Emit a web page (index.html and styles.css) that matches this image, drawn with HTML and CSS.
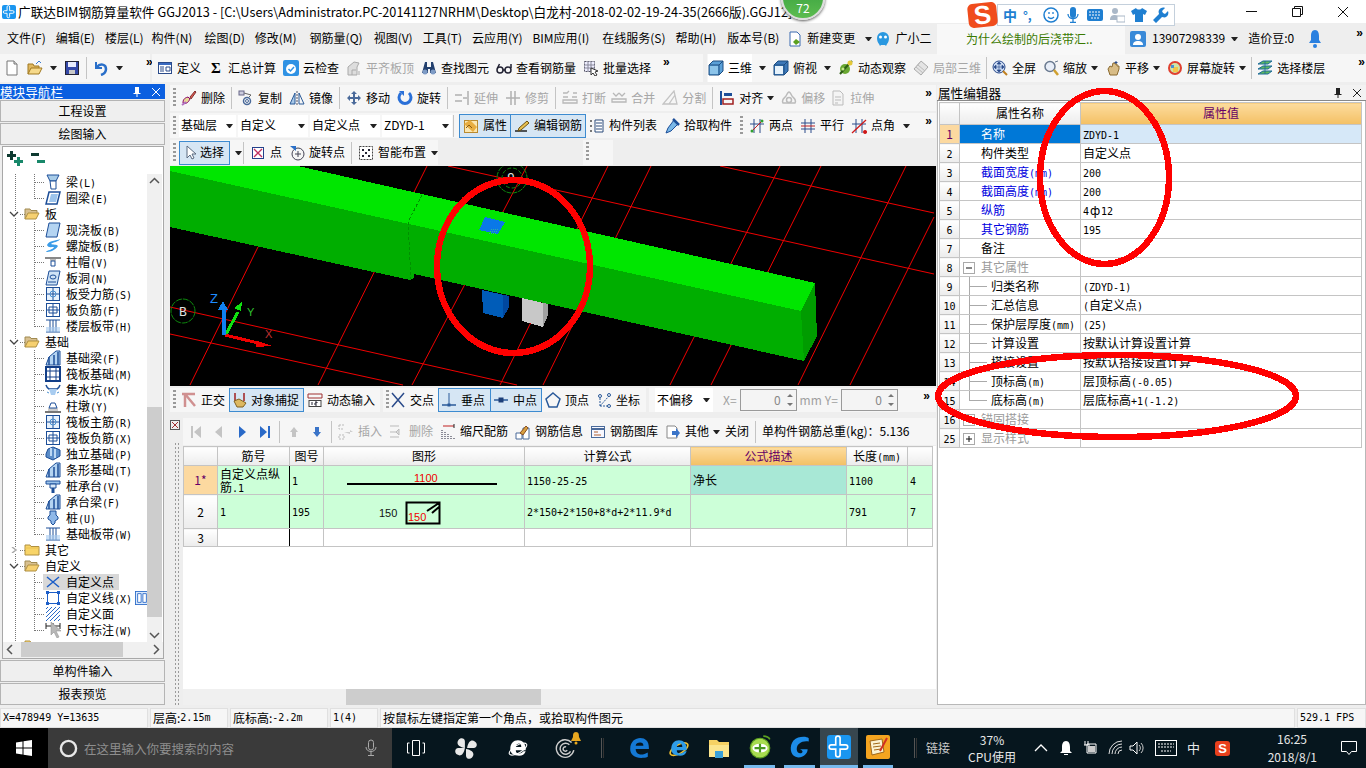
FILE: index.html
```html
<!DOCTYPE html>
<html lang="zh-CN">
<head>
<meta charset="utf-8">
<title>广联达BIM钢筋算量软件 GGJ2013</title>
<link rel="stylesheet" href="styles.css">
</head>
<body>
<svg class="defs" aria-hidden="true">
<symbol id="new" viewBox="0 0 16 16"><path d="M3 1h7l3 3v11H3z" fill="#fff" stroke="#777"/><path d="M10 1v3h3" fill="#ddd" stroke="#777"/></symbol>
<symbol id="open" viewBox="0 0 16 16"><path d="M1 14V4h5l1 2h5v2" fill="#e0b860" stroke="#a07820"/><path d="M1 14l3-6h11l-3 6z" fill="#f6d98a" stroke="#a07820"/><path d="M9 4l3-3 2 2" fill="none" stroke="#3a7ad0"/></symbol>
<symbol id="save" viewBox="0 0 16 16"><rect x="1.500" y="1.500" width="13" height="13" fill="#3448a8" stroke="#223"/><rect x="4" y="2" width="8" height="5" fill="#e8ecff"/><rect x="5" y="10" width="6" height="4" fill="#c8c8c8"/></symbol>
<symbol id="undo" viewBox="0 0 16 16"><path d="M3 2v6h6" fill="none" stroke="#2a6fc9" stroke-width="2"/><path d="M4 7c3-4 9-3 9 2 0 3-2 5-5 6" fill="none" stroke="#2a6fc9" stroke-width="2.500"/></symbol>
<symbol id="def" viewBox="0 0 16 16"><rect x="1.500" y="2.500" width="13" height="11" fill="#fff" stroke="#2a4a8a"/><rect x="2" y="3" width="12" height="2" fill="#3a6ac0"/><path d="M3 7h4M3 9h4M3 11h4M9 7h4v4H9z" fill="none" stroke="#2a4a8a"/></symbol>
<symbol id="cloud" viewBox="0 0 16 16"><rect x="0" y="0" width="16" height="16" rx="2" fill="#2f92e4"/><circle cx="8" cy="9" r="5" fill="#fff"/><path d="M5.500 9l2 2 3.500-4" fill="none" stroke="#2f92e4" stroke-width="1.500"/></symbol>
<symbol id="flat" viewBox="0 0 16 16"><path d="M2 15V7l6-5 5 1-2 4v8z" fill="#ddd" stroke="#aaa"/><path d="M6 15v-5h4M13 11v4" fill="none" stroke="#aaa"/></symbol>
<symbol id="binoc" viewBox="0 0 16 16"><path d="M4 2h2v5h4V2h2l3 11H9V9H7v4H1z" fill="#23406e"/><circle cx="4" cy="12" r="2.500" fill="#7f9cc6"/><circle cx="12" cy="12" r="2.500" fill="#7f9cc6"/></symbol>
<symbol id="glass" viewBox="0 0 16 16"><circle cx="4" cy="10" r="3" fill="none" stroke="#223" stroke-width="1.500"/><circle cx="12" cy="10" r="3" fill="none" stroke="#223" stroke-width="1.500"/><path d="M7 10h2M1.500 8l2-4M15 8v-4" fill="none" stroke="#223" stroke-width="1.500"/></symbol>
<symbol id="batch" viewBox="0 0 16 16"><path d="M1.500 1.500h10v10h-10z" fill="#eef" stroke="#556" stroke-dasharray="2 1"/><path d="M1 5h11M1 8h11M5 1v11M8 1v11" stroke="#889" fill="none"/><path d="M8 8l7 3-3 1 2 3-2 1-2-3-2 2z" fill="#fff" stroke="#333"/></symbol>
<symbol id="cube" viewBox="0 0 16 16"><path d="M1 5l4-4h10v10l-4 4H1z" fill="#5aa0d8" stroke="#1d4d80"/><path d="M1 5h10v10M11 5l4-4" fill="none" stroke="#1d4d80"/><path d="M2 6h8v8H2z" fill="#8cc4ea"/></symbol>
<symbol id="top" viewBox="0 0 16 16"><path d="M1 5l4-4h10v10l-4 4H1z" fill="#3d78b8" stroke="#1d4d80"/><path d="M2 6h8v8H2z" fill="#e6f2fb"/><path d="M1 5h10v10M11 5l4-4" fill="none" stroke="#1d4d80"/></symbol>
<symbol id="orbit" viewBox="0 0 16 16"><circle cx="7" cy="9" r="5" fill="#6aa832"/><path d="M2 14l7-8 5-5" stroke="#2d5f16" stroke-width="2"/><circle cx="12" cy="3" r="2.500" fill="#e4c838"/><circle cx="5" cy="9" r="1.500" fill="#c6e88a"/></symbol>
<symbol id="local" viewBox="0 0 16 16"><path d="M1 9l7-8 7 6-7 8z" fill="#e4e4e4" stroke="#aaa"/><path d="M5 5l7 6M3 7l7 6M8 1l-4 5" stroke="#bbb" fill="none"/></symbol>
<symbol id="full" viewBox="0 0 16 16"><circle cx="7" cy="7" r="6" fill="#c8d8f0" stroke="#2a4a8a"/><path d="M7 2v10M2 7h10M7 2L5 4h4zM7 12l-2-2h4zM2 7l2-2v4zM12 7l-2-2v4z" fill="#2a4a8a" stroke="#2a4a8a" stroke-width=".6"/><path d="M11 11l4 4" stroke="#c08020" stroke-width="2"/></symbol>
<symbol id="zoom" viewBox="0 0 16 16"><circle cx="7" cy="6.500" r="5" fill="#e8eef8" stroke="#6a7a90" stroke-width="1.500"/><path d="M11 10l4 5" stroke="#d0a030" stroke-width="2.500"/><path d="M12 2l3-1" stroke="#6a7a90"/></symbol>
<symbol id="pan" viewBox="0 0 16 16"><path d="M3 9l2 6h7l2-6V6l-2 0V4l-2 0V3L8 3 7 7 5 6z" fill="#d8bc86" stroke="#8a6a30"/><path d="M11 1v3M9.500 2.500h3" stroke="#2a4a8a" fill="none"/></symbol>
<symbol id="rots" viewBox="0 0 16 16"><circle cx="8" cy="8" r="6" fill="#cfe5a8" stroke="#e04030" stroke-width="2"/><rect x="6" y="7" width="5" height="5" fill="#f2c84a"/><rect x="4" y="5" width="3" height="3" fill="#4a90d0"/></symbol>
<symbol id="floors" viewBox="0 0 16 16"><path d="M1 4l5-3h9L11 4zM1 9l5-3h9l-4 3zM1 14l5-3h9l-4 3z" fill="#5cb85c" stroke="#1e6a9a"/><path d="M7 1h2v13H7z" fill="#1e6a9a" opacity=".4"/></symbol>
<symbol id="brush" viewBox="0 0 16 16"><path d="M9 7l5-6 1 1-5 7z" fill="#e05a50" stroke="#803030"/><path d="M2 13c3 1 5 0 7-4l-2-2c-4 1-5 3-5 6z" fill="#e8d898" stroke="#806"/><path d="M1 15l4-3" stroke="#b070c0" stroke-width="2"/></symbol>
<symbol id="copy" viewBox="0 0 16 16"><circle cx="9" cy="11" r="3.500" fill="none" stroke="#4a6a9a" stroke-width="1.500"/><circle cx="9" cy="11" r="1.500" fill="none" stroke="#4a6a9a"/><rect x="1" y="1" width="5" height="4" fill="#ccd" stroke="#668"/><path d="M6 3l7 2-2 2" fill="none" stroke="#666"/></symbol>
<symbol id="mirror" viewBox="0 0 16 16"><path d="M8 1v14" stroke="#556" stroke-dasharray="2 1"/><path d="M6 3v11H1z" fill="#a8c8e8" stroke="#2a5a98"/><path d="M10 3v11h5z" fill="none" stroke="#2a5a98"/></symbol>
<symbol id="move" viewBox="0 0 16 16"><path d="M8 1l3 3H9v3h3V5l3 3-3 3V9H9v3h2l-3 3-3-3h2V9H4v2L1 8l3-3v2h3V4H5z" fill="#4a6a9a"/></symbol>
<symbol id="rotate" viewBox="0 0 16 16"><path d="M4 3a6 6 0 1 0 8 0" fill="none" stroke="#2a70d8" stroke-width="3"/><path d="M2 1h5v5z" fill="#2a70d8"/></symbol>
<symbol id="ext" viewBox="0 0 16 16"><path d="M14 1v14M1 5h7M1 11h7M9 8h4" fill="none" stroke="#b0b0b0" stroke-width="1.500"/></symbol>
<symbol id="trim" viewBox="0 0 16 16"><path d="M6 1v14M10 1v14M1 8h14" fill="none" stroke="#b0b0b0" stroke-width="1.500"/></symbol>
<symbol id="brk" viewBox="0 0 16 16"><path d="M1 3h4l2-2M15 3h-4M1 13v-3h14v3H1zM1 7h5M10 7h5" fill="none" stroke="#b8b8b8" stroke-width="1.300"/></symbol>
<symbol id="mrg" viewBox="0 0 16 16"><path d="M2 3l3 3 3-3M8 3l3 3 3-3M1 9h14v3H1z" fill="none" stroke="#b8b8b8" stroke-width="1.300"/></symbol>
<symbol id="spl" viewBox="0 0 16 16"><path d="M1 14h14L12 1zM7 14l6-9" fill="none" stroke="#c4c4c4" stroke-width="1.300"/></symbol>
<symbol id="align" viewBox="0 0 16 16"><path d="M2 1v14" stroke="#1c4e98" stroke-width="2"/><path d="M5 3h8v3H5z" fill="#1c4e98"/><path d="M4 9h10v5H4z" fill="none" stroke="#a02020" stroke-width="1.500"/></symbol>
<symbol id="off" viewBox="0 0 16 16"><path d="M2 13c-2-4 2-5 3-7s2-4 3-4 2 2 3 4 5 3 3 7z" fill="none" stroke="#bbb" stroke-width="1.500"/><circle cx="8" cy="10" r="2.500" fill="none" stroke="#bbb" stroke-width="1.500"/></symbol>
<symbol id="strc" viewBox="0 0 16 16"><path d="M3 1h7l3 3v11H3z" fill="#f4f4f4" stroke="#bbb"/><path d="M5 7h6M5 10h6M5 13h3" stroke="#bbb"/></symbol>
<symbol id="attr" viewBox="0 0 16 16"><rect x="1.500" y="2.500" width="13" height="12" fill="#fbe6b0" stroke="#b98a30"/><path d="M1 6l6-4 7 7-4 5z" fill="#e8ad40"/><path d="M3 10l3-3 3 3" stroke="#8a5a10" fill="none"/></symbol>
<symbol id="edit" viewBox="0 0 16 16"><path d="M1 13h12" stroke="#222" stroke-width="1.500"/><path d="M5 10l8-7 2 2-8 7-3 1z" fill="#e8c050" stroke="#6a5010"/></symbol>
<symbol id="lst" viewBox="0 0 16 16"><path d="M6 2h8v12H6z" fill="#fff" stroke="#2a4a7a"/><path d="M7 5h6M7 8h6M7 11h6" stroke="#2a4a7a"/><path d="M1 2h2v2H1zM1 7h2v2H1zM1 12h2v2H1z" fill="#777"/></symbol>
<symbol id="pick" viewBox="0 0 16 16"><path d="M10 2l4 4-7 7-5 2 2-5z" fill="#7ab8e8" stroke="#1c4e98"/><path d="M9 1l6 6" stroke="#1c4e98" stroke-width="2.500"/></symbol>
<symbol id="two" viewBox="0 0 16 16"><path d="M5 1v14M11 1v14M1 6h14" stroke="#2a4a8a" fill="none"/><path d="M2 14L14 2" stroke="#c02020"/><circle cx="3" cy="13" r="1.500" fill="#30a030"/><circle cx="13" cy="3" r="1.500" fill="#30a030"/></symbol>
<symbol id="par" viewBox="0 0 16 16"><path d="M5 1v14M11 1v14M1 5h14M1 11h14" stroke="#2a4a8a" fill="none"/><path d="M1 8h14" stroke="#c02020"/></symbol>
<symbol id="ang" viewBox="0 0 16 16"><path d="M5 1v14M11 1v14M1 6h14" stroke="#2a4a8a" fill="none"/><path d="M1 15L15 2" stroke="#d01818" stroke-width="1.300"/><path d="M14 12a2 2 0 1 0 .1 0" fill="#d01818"/></symbol>
<symbol id="arrow" viewBox="0 0 16 16"><path d="M5 1v12l3-3 2 4 2-1-2-4h4z" fill="#fff" stroke="#5a6a80"/></symbol>
<symbol id="pt" viewBox="0 0 16 16"><rect x="2.500" y="2.500" width="11" height="11" fill="#fff" stroke="#24408a"/><path d="M4 4l8 8M12 4l-8 8" stroke="#c03060" stroke-width="1.300"/></symbol>
<symbol id="rpt" viewBox="0 0 16 16"><circle cx="9" cy="9" r="6" fill="none" stroke="#445"/><path d="M9 6v6M6 9h6" stroke="#445"/><path d="M1 1h6v5z" fill="#2a70c8"/></symbol>
<symbol id="smart" viewBox="0 0 16 16"><rect x="1.500" y="1.500" width="13" height="13" fill="#fff" stroke="#444" stroke-dasharray="2 1"/><path d="M4 4h2v2H4zM10 4h2v2h-2zM4 10h2v2H4zM10 10h2v2h-2zM7 7h2v2H7z" fill="#223"/></symbol>
<symbol id="ortho" viewBox="0 0 16 16"><path d="M1 2h13M4 2l10 12" stroke="#d09090" stroke-width="2.500" fill="none"/><path d="M4 2v13" stroke="#d09090" stroke-width="2.500"/></symbol>
<symbol id="snap" viewBox="0 0 16 16"><path d="M3 1v8M12 1v8" stroke="#a02020" stroke-width="1.500"/><path d="M2 9l5-2 7 4-3 4H5z" fill="#ddb860" stroke="#806020"/></symbol>
<symbol id="dyn" viewBox="0 0 16 16"><path d="M1 2h14M1 6h14M1 2v4M15 2v4" stroke="#a03030" fill="none"/><rect x="2" y="8.500" width="12" height="6" fill="#fff" stroke="#444"/><path d="M5 10v3M8 10h2v1H8v2h2" stroke="#223" fill="none"/></symbol>
<symbol id="cross" viewBox="0 0 16 16"><path d="M2 1l12 14M14 1L2 15" stroke="#2a4a8a" stroke-width="1.500"/></symbol>
<symbol id="perp" viewBox="0 0 16 16"><path d="M1 13h14" stroke="#2a5a9a" stroke-width="1.500"/><path d="M8 1v12" stroke="#2a5a9a"/><rect x="6.500" y="11.500" width="3" height="3" fill="#2a5a9a"/></symbol>
<symbol id="mid" viewBox="0 0 16 16"><path d="M1 8h14" stroke="#2a5a9a" stroke-width="1.500"/><rect x="5.500" y="5.500" width="5" height="5" fill="#1c3e78"/></symbol>
<symbol id="vtx" viewBox="0 0 16 16"><path d="M8 1l7 6-3 8H4L1 7z" fill="none" stroke="#2a5a9a" stroke-width="1.500"/></symbol>
<symbol id="crd" viewBox="0 0 16 16"><path d="M4 14V5M4 14h9M4 14L13 4" stroke="#2a5a9a" fill="none" stroke-dasharray="2 1"/><circle cx="4" cy="4" r="1.500" fill="none" stroke="#2a5a9a"/><circle cx="13" cy="14" r="1.500" fill="none" stroke="#2a5a9a"/><circle cx="13" cy="3" r="1.500" fill="none" stroke="#2a5a9a"/></symbol>
<symbol id="first" viewBox="0 0 16 16"><path d="M3 2h2v12H3zM13 2v12L6 8z" fill="#c4c4c4"/></symbol>
<symbol id="prev" viewBox="0 0 16 16"><path d="M11 2v12L4 8z" fill="#c4c4c4"/></symbol>
<symbol id="next" viewBox="0 0 16 16"><path d="M5 2v12l7-6z" fill="#2a6ac8"/></symbol>
<symbol id="last" viewBox="0 0 16 16"><path d="M11 2h2v12h-2zM3 2v12l7-6z" fill="#2a6ac8"/></symbol>
<symbol id="up" viewBox="0 0 16 16"><path d="M8 3l4 5H10v5H6V8H4z" fill="#c4c4c4"/></symbol>
<symbol id="down" viewBox="0 0 16 16"><path d="M8 13l4-5H10V3H6v5H4z" fill="#3a74c8"/></symbol>
<symbol id="ins" viewBox="0 0 16 16"><path d="M1 1h5M1 1v4h5M1 11h5v4H1z" stroke="#bbb" fill="none" stroke-dasharray="2 1"/><path d="M6 8h9l-3-2v4z" fill="#ccc"/></symbol>
<symbol id="del" viewBox="0 0 16 16"><path d="M1 2h9M1 13h9" stroke="#bbb"/><path d="M1 8h6l3-3v6l-3-3" stroke="#bbb" fill="#ddd"/></symbol>
<symbol id="scl" viewBox="0 0 16 16"><path d="M2 15V5M5 15V8M8 15v-5M11 15v-3M14 15v-1" stroke="#556" stroke-width="1.300" stroke-dasharray="1 1"/><path d="M3 2h11" stroke="#c02020"/><path d="M14 0v4" stroke="#222"/></symbol>
<symbol id="info" viewBox="0 0 16 16"><path d="M1 15V9h6v6z" fill="#fff" stroke="#4a6a9a"/><path d="M8 15V4h6v11z" fill="#fff" stroke="#4a6a9a"/><path d="M5 9l6-7 2 2-5 7z" fill="#d8a040" stroke="#8a5020"/></symbol>
<symbol id="lib" viewBox="0 0 16 16"><rect x="1.500" y="2.500" width="13" height="11" fill="#f8f8ff" stroke="#4a6a9a"/><path d="M2 5h12" stroke="#4a6a9a" stroke-width="2"/><path d="M4 8h4M4 11h7" stroke="#b06030"/></symbol>
<symbol id="other" viewBox="0 0 16 16"><path d="M2 2h8l2 2v10H2z" fill="#fff" stroke="#888"/><path d="M7 7h4V4l4 5-4 5v-3H7z" fill="#3a74c8"/></symbol>
<symbol id="fopen" viewBox="0 0 16 16"><path d="M1 13V3h5l1 1.500h6V7" fill="#d8c090" stroke="#a08a50"/><path d="M1 13l3-6h11l-3 6z" fill="#f6d070" stroke="#b09040"/></symbol>
<symbol id="fclose" viewBox="0 0 16 16"><path d="M1 3h5l1 1.500h8V13H1z" fill="#f8d468" stroke="#b09040"/><path d="M1 6h14" stroke="#e8c050"/></symbol>
<symbol id="t1" viewBox="0 0 16 16"><path d="M2 1h12l-3 6H5z" fill="#a8cce8" stroke="#1c4e98"/><path d="M5 7h6v8H6z" fill="#fff" stroke="#1c4e98"/></symbol>
<symbol id="t2" viewBox="0 0 16 16"><path d="M4 2h11l-3 12H1z" fill="#fff" stroke="#1c4e98" stroke-width="1.500"/><path d="M6 4h7l-2 8H4z" fill="#9cc4ec"/></symbol>
<symbol id="t3" viewBox="0 0 16 16"><path d="M4 1h11l-3 14H1z" fill="#b4d4f2" stroke="#1c4e98"/></symbol>
<symbol id="t4" viewBox="0 0 16 16"><path d="M2 7c2-5 9-4 13-6-1 3-7 3-9 5 2 1 6 0 7 2-3 5-9 6-12 6 1-2 7-2 8-5-3 0-6 1-7-2z" fill="#3a9ce8"/></symbol>
<symbol id="t5" viewBox="0 0 16 16"><path d="M0 3h16v2H0z" fill="#888"/><path d="M5 5h6v2H5z" fill="#bbb"/><path d="M6 7h4v5H6z" fill="#fff" stroke="#1c4e98"/></symbol>
<symbol id="t6" viewBox="0 0 16 16"><path d="M4 1h11l-3 14H1z" fill="#cfe3f6" stroke="#1c4e98"/><ellipse cx="8" cy="7" rx="3" ry="2" fill="none" stroke="#1c4e98"/><path d="M3 12h8" stroke="#1c4e98"/></symbol>
<symbol id="t7" viewBox="0 0 16 16"><rect x="1.500" y="1.500" width="13" height="13" fill="#e8f2fc" stroke="#1c4e98"/><path d="M8 2v12M2 8h12" stroke="#1c4e98"/><circle cx="8" cy="8" r="3" fill="none" stroke="#4a90d0"/></symbol>
<symbol id="t8" viewBox="0 0 16 16"><rect x="1.500" y="1.500" width="13" height="13" fill="#fff" stroke="#1c4e98"/><path d="M8 2v12M2 8h12M4 5h8v6H4z" fill="none" stroke="#1c4e98"/></symbol>
<symbol id="t9" viewBox="0 0 16 16"><path d="M1 2h14M1 14h14M5 2v12M11 2v12M8 2v12" fill="none" stroke="#1c4e98"/><rect x="1" y="9" width="14" height="5" fill="#a8ccf0" opacity=".6"/></symbol>
<symbol id="t10" viewBox="0 0 16 16"><path d="M1 15l3-8 7-6h4v14z" fill="#b4d4f2" stroke="#1c4e98"/><path d="M4 15V7M9 15V5M13 15V2" stroke="#1c4e98" fill="none" stroke-width="1.500"/></symbol>
<symbol id="t11" viewBox="0 0 16 16"><rect x="1" y="1" width="14" height="14" fill="none" stroke="#123e88" stroke-width="2"/><path d="M1 5h14M1 11h14M5 1v14M11 1v14" stroke="#123e88"/></symbol>
<symbol id="t12" viewBox="0 0 16 16"><path d="M1 3c1 3 3 4 3 4h8s2-1 3-4" fill="none" stroke="#1c4e98" stroke-width="1.500"/><path d="M4 7l2 6h4l2-6z" fill="#a8ccf0"/><path d="M2 10l2 1M14 10l-2 1" stroke="#4a90d0"/></symbol>
<symbol id="t13" viewBox="0 0 16 16"><path d="M0 13h16v2H0z" fill="#777"/><path d="M3 10h10v3H3z" fill="#ccc"/><path d="M6 5h4l2 5H4z" fill="#fff" stroke="#1c4e98"/></symbol>
<symbol id="t14" viewBox="0 0 16 16"><path d="M3 3l5-2 7 3v6l-7 4-7-3V8z" fill="#5a8cc8" stroke="#1c4e98"/><path d="M6 2v8M10 3v9" stroke="#bcd8f4" stroke-width="2"/></symbol>
<symbol id="t15" viewBox="0 0 16 16"><path d="M1 3h14v3H1z" fill="#9cc4ec" stroke="#1c4e98"/><path d="M5 6h6v4H5z" fill="#d8e8f8" stroke="#1c4e98"/><path d="M8 10v5" stroke="#1c4e98" stroke-width="3"/></symbol>
<symbol id="t16" viewBox="0 0 16 16"><path d="M5 1h6v4l2 2v2l-3 2v2l-2 2-2-2v-2L3 9V7l2-2z" fill="#8fb8e8" stroke="#1c4e98"/></symbol>
<symbol id="tp" viewBox="0 0 16 16"><path d="M2 3l12 10M14 3L2 13" stroke="#1c5ec8" stroke-width="1.500"/></symbol>
<symbol id="tl" viewBox="0 0 16 16"><rect x="2.500" y="2.500" width="11" height="11" fill="none" stroke="#1c5ec8"/><path d="M1 1h3v3H1zM12 1h3v3h-3zM1 12h3v3H1zM12 12h3v3h-3z" fill="#1c5ec8"/></symbol>
<symbol id="ta" viewBox="0 0 16 16"><path d="M1 3l2-2M1 7l6-6M1 11L11 1M1 15L15 1M5 15L15 5M9 15l6-6M13 15l2-2" stroke="#2a6ac8"/></symbol>
<symbol id="td" viewBox="0 0 16 16"><path d="M1 4h14M1 1v6M8 1v6M15 1v6" stroke="#222" fill="none"/></symbol>
<symbol id="tb" viewBox="0 0 16 16"><rect x=".5" y=".5" width="15" height="15" fill="#dbeafc" stroke="#2a6ac8"/><path d="M3 3h4v10H3zM9 3h4v10H9z" fill="#fff" stroke="#2a6ac8"/></symbol>
<symbol id="edge" viewBox="0 0 20 20"><path d="M2 11C2 4 7 1 11 1c5 0 8 3 8 9v1H7c0 3 2 5 5 5 2 0 4-1 6-2v4c-2 1-4 1-6 1-6 0-10-3-10-8zM7 8h7c0-2-1-3-3-3s-4 1-4 3z" fill="#1478d4"/></symbol>
<symbol id="iee" viewBox="0 0 20 20"><ellipse cx="10" cy="11" rx="9" ry="4" fill="none" stroke="#f0c030" stroke-width="1.500" transform="rotate(-30 10 11)"/><path d="M3 11c0-5 3-8 7-8s7 3 7 8v1H8c0 2 1 3 3 3s3-1 4-2h2c-1 3-3 4-6 4-5 0-8-2-8-6zM8 9h5c0-2-1-3-2-3s-3 1-3 3z" fill="#2e9ce8"/></symbol>
<symbol id="ie0" viewBox="0 0 20 20"><path d="M3 11c0-5 3-8 7-8s7 3 7 8v1H8c0 2 1 3 3 3s3-1 4-2h2c-1 3-3 4-6 4-5 0-8-2-8-6zM8 9h5c0-2-1-3-2-3s-3 1-3 3z" fill="#fff"/><ellipse cx="10" cy="11" rx="9" ry="3.500" fill="none" stroke="#fff" transform="rotate(-30 10 11)"/></symbol>
<symbol id="fan" viewBox="0 0 20 20"><path d="M9 10C3 9 1 6 3 3s6-2 6 1zM11 10c1-6 4-8 7-6s2 6-1 6zM10 11c6 1 8 4 6 7s-6 2-6-1zM9 10c-1 6-4 8-7 6s-2-6 1-6z" fill="#e8e8e8"/></symbol>
<symbol id="swirl" viewBox="0 0 20 20"><path d="M16 5A8 8 0 1 0 18 12M14 7a5 5 0 1 0 1 6M11 9a2 2 0 1 0 1 3" fill="none" stroke="#ccc" stroke-width="1.300"/></symbol>
<symbol id="fold" viewBox="0 0 22 22"><path d="M1 3h8l2 2h10v15H1z" fill="#f6d264"/><path d="M1 8h20v12H1z" fill="#fce68e"/><path d="M7 14h8v7H7z" fill="#3aa0d8"/></symbol>
<symbol id="grn" viewBox="0 0 22 22"><circle cx="11" cy="12" r="9" fill="#a8dc50" stroke="#5aa020"/><ellipse cx="11" cy="12" rx="7" ry="4" fill="#fff"/><path d="M6 12h10M11 8v8" stroke="#4a9820" stroke-width="2"/><path d="M14 1c3 0 5 1 6 3" stroke="#5aa020" fill="none" stroke-width="1.500"/></symbol>
<symbol id="gl" viewBox="0 0 22 22"><path d="M19 3c-2-2-10-2-14 2-4 5-3 13 2 15 5 2 11-2 11-7h-7c2 1 3 2 2 3-2 2-5 0-5-3 0-5 5-8 11-7z" fill="#1c8ce8"/></symbol>
<symbol id="cross2" viewBox="0 0 22 22"><rect x="0" y="0" width="22" height="22" rx="3" fill="#1a96f0"/><path d="M8 3a2 2 0 0 1 4 0v6h5a2 2 0 0 1 0 4h-5v5a2 2 0 0 1-4 0v-5H4a2 2 0 0 1 0-4h4z" fill="none" stroke="#fff" stroke-width="1.500"/></symbol>
<symbol id="note" viewBox="0 0 24 24"><rect x="0" y="0" width="24" height="24" rx="2" fill="#f4a420"/><path d="M4 6l12-2 2 13-12 3z" fill="#fbf2d0" stroke="#a06818"/><path d="M7 9l7-1M7 12l8-1M8 15l7-1" stroke="#a06818"/><path d="M14 16l7-13" stroke="#d03020" stroke-width="2"/></symbol>
</svg>

<div class="app">

<header class="title">
  <svg class="appicon" viewBox="0 0 14 14"><use href="#cross2"/></svg>
  <span class="title-text">广联达BIM钢筋算量软件 GGJ2013 - [C:\Users\Administrator.PC-20141127NRHM\Desktop\白龙村-2018-02-02-19-24-35(2666版).GGJ12]</span>
  <div class="winbtns">
    <svg class="win" viewBox="0 0 46 23"><path d="M18 11.500h11" stroke="#111"/></svg>
    <svg class="win" viewBox="0 0 46 23"><path d="M18.500 8.500h8v8h-8zM20.500 8V6.500h8v8H27" fill="none" stroke="#111"/></svg>
    <svg class="win" viewBox="0 0 46 23"><path d="M18 7l10 10M28 7L18 17" stroke="#111"/></svg>
  </div>
</header>

<nav class="menu">
  <div class="menu-items">
    <span>文件(F)</span><span>编辑(E)</span><span>楼层(L)</span><span class="ml-2">构件(N)</span><span class="ml2">绘图(D)</span><span>修改(M)</span><span class="ml3">钢筋量(Q)</span><span class="ml1">视图(V)</span><span>工具(T)</span><span>云应用(Y)</span><span>BIM应用(I)</span><span class="ml3">在线服务(S)</span><span>帮助(H)</span><span class="ml1">版本号(B)</span>
    <span class="it ml-2"><svg class="ic" viewBox="0 0 16 16"><path d="M3 1h7l3 3v11H3z" fill="#fff" stroke="#3a6ab0"/><path d="M9 8l4 3-4 3-3-3z" fill="#5aa020"/></svg>新建变更</span><i class="ar"></i>
    <span class="it gx"><svg class="ic" viewBox="0 0 16 16"><path d="M2 7a6 6 0 0 1 12 0c0 3-1 5-2 6l-1 2-1-1H6l-1 1-1-2C3 12 2 10 2 7z" fill="#2a98e0"/><circle cx="5.500" cy="6" r="1.500" fill="#fff"/><circle cx="10.500" cy="6" r="1.500" fill="#fff"/></svg>广小二</span>
  </div>
  <div class="notice">为什么绘制的后浇带汇..</div>
  <div class="user">
    <svg class="ic" viewBox="0 0 16 16"><rect width="16" height="16" rx="2" fill="#3a8ad8"/><circle cx="8" cy="6" r="3" fill="#fff"/><path d="M3 14c0-3 2-4 5-4s5 1 5 4z" fill="#fff"/></svg>
    <span>13907298339</span><i class="ar"></i><span class="bean">造价豆:0</span>
    <svg class="bell" viewBox="0 0 14 20"><path d="M7 1c3 0 4 3 4 6v4l2 3H1l2-3V7c0-3 1-6 4-6z" fill="#2a80e0"/><circle cx="7" cy="17" r="2" fill="#2a80e0"/></svg>
  </div>
  <b class="more">»</b>
</nav>

<div class="tb1">
  <div class="tb1-a">
    <svg class="ic"><use href="#new"/></svg>
    <svg class="ic"><use href="#open"/></svg><i class="ar"></i>
    <svg class="ic"><use href="#save"/></svg><i class="sep"></i>
    <svg class="ic"><use href="#undo"/></svg><i class="ar"></i>
    <b class="more">»</b>
  </div>
  <div class="tb1-b">
    <span class="it"><svg class="ic"><use href="#def"/></svg>定义</span>
    <span class="it"><span class="sigma">Σ</span>汇总计算</span>
    <span class="it"><svg class="ic"><use href="#cloud"/></svg>云检查</span>
    <span class="it dim"><svg class="ic"><use href="#flat"/></svg>平齐板顶</span>
    <span class="it"><svg class="ic"><use href="#binoc"/></svg>查找图元</span>
    <span class="it"><svg class="ic"><use href="#glass"/></svg>查看钢筋量</span>
    <span class="it"><svg class="ic"><use href="#batch"/></svg>批量选择</span>
    <b class="more">»</b>
  </div>
  <div class="tb1-c">
    <span class="it lit"><svg class="ic"><use href="#cube"/></svg>三维</span><i class="ar"></i>
    <span class="it"><svg class="ic"><use href="#top"/></svg>俯视</span><i class="ar"></i>
    <span class="it"><svg class="ic"><use href="#orbit"/></svg>动态观察</span>
    <span class="it dim"><svg class="ic"><use href="#local"/></svg>局部三维</span><i class="sep n"></i>
    <span class="it"><svg class="ic"><use href="#full"/></svg>全屏</span>
    <span class="it"><svg class="ic"><use href="#zoom"/></svg>缩放</span><i class="ar tight"></i>
    <span class="it"><svg class="ic"><use href="#pan"/></svg>平移</span><i class="ar tight"></i>
    <span class="it"><svg class="ic"><use href="#rots"/></svg>屏幕旋转</span><i class="ar tight"></i><i class="sep n"></i>
    <span class="it"><svg class="ic"><use href="#floors"/></svg>选择楼层</span>
    <b class="more pushed">»</b>
  </div>
</div>

<main class="main">

<aside class="nav">
  <div class="paneltitle"><span>模块导航栏</span>
    <span class="pt-icons"><svg class="ti" viewBox="0 0 10 12"><path d="M3 1h4v6h1.500v1h-3v3h-1V8h-3V7H3z" fill="#fff"/></svg><svg class="ti" viewBox="0 0 10 12"><path d="M1 2l8 8M9 2l-8 8" stroke="#fff"/></svg></span></div>
  <div class="navbtn">工程设置</div>
  <div class="navbtn">绘图输入</div>
  <div class="treebox">
    <div class="treetop">
      <svg class="tti" viewBox="0 0 16 16"><path d="M3 1h3v3h3v3H6v3H3V7H0V4h3z" fill="#0e3a30"/><path d="M10 7h3v3h3v3h-3v3h-3v-3H7v-3h3z" fill="#18886a"/></svg>
      <svg class="tti" viewBox="0 0 16 16"><path d="M1 3h8v3H1z" fill="#0e3a30"/><path d="M7 10h8v3H7z" fill="#18886a"/></svg>
    </div>
    <div class="treemid">
      <div class="treelist">
        <div class="tr c"><svg class="ic"><use href="#t1"/></svg><span>梁<i class="m">(L)</i></span></div>
        <div class="tr c last"><svg class="ic"><use href="#t2"/></svg><span>圈梁<i class="m">(E)</i></span></div>
        <div class="tr f"><svg class="chev" viewBox="0 0 10 6"><path d="M1 1l4 4 4-4" fill="none" stroke="#444" stroke-width="1.300"/></svg><svg class="ic"><use href="#fopen"/></svg><span>板</span></div>
        <div class="tr c"><svg class="ic"><use href="#t3"/></svg><span>现浇板<i class="m">(B)</i></span></div>
        <div class="tr c"><svg class="ic"><use href="#t4"/></svg><span>螺旋板<i class="m">(B)</i></span></div>
        <div class="tr c"><svg class="ic"><use href="#t5"/></svg><span>柱帽<i class="m">(V)</i></span></div>
        <div class="tr c"><svg class="ic"><use href="#t6"/></svg><span>板洞<i class="m">(N)</i></span></div>
        <div class="tr c"><svg class="ic"><use href="#t7"/></svg><span>板受力筋<i class="m">(S)</i></span></div>
        <div class="tr c"><svg class="ic"><use href="#t8"/></svg><span>板负筋<i class="m">(F)</i></span></div>
        <div class="tr c last"><svg class="ic"><use href="#t9"/></svg><span>楼层板带<i class="m">(H)</i></span></div>
        <div class="tr f"><svg class="chev" viewBox="0 0 10 6"><path d="M1 1l4 4 4-4" fill="none" stroke="#444" stroke-width="1.300"/></svg><svg class="ic"><use href="#fopen"/></svg><span>基础</span></div>
        <div class="tr c"><svg class="ic"><use href="#t10"/></svg><span>基础梁<i class="m">(F)</i></span></div>
        <div class="tr c"><svg class="ic"><use href="#t11"/></svg><span>筏板基础<i class="m">(M)</i></span></div>
        <div class="tr c"><svg class="ic"><use href="#t12"/></svg><span>集水坑<i class="m">(K)</i></span></div>
        <div class="tr c"><svg class="ic"><use href="#t13"/></svg><span>柱墩<i class="m">(Y)</i></span></div>
        <div class="tr c"><svg class="ic"><use href="#t7"/></svg><span>筏板主筋<i class="m">(R)</i></span></div>
        <div class="tr c"><svg class="ic"><use href="#t8"/></svg><span>筏板负筋<i class="m">(X)</i></span></div>
        <div class="tr c"><svg class="ic"><use href="#t14"/></svg><span>独立基础<i class="m">(P)</i></span></div>
        <div class="tr c"><svg class="ic"><use href="#t10"/></svg><span>条形基础<i class="m">(T)</i></span></div>
        <div class="tr c"><svg class="ic"><use href="#t15"/></svg><span>桩承台<i class="m">(V)</i></span></div>
        <div class="tr c"><svg class="ic"><use href="#t10"/></svg><span>承台梁<i class="m">(F)</i></span></div>
        <div class="tr c"><svg class="ic"><use href="#t16"/></svg><span>桩<i class="m">(U)</i></span></div>
        <div class="tr c last"><svg class="ic"><use href="#t9"/></svg><span>基础板带<i class="m">(W)</i></span></div>
        <div class="tr f"><svg class="chev" viewBox="0 0 10 6"><path d="M3 0l4 3-4 3" fill="none" stroke="#aaa" stroke-width="1.500"/></svg><svg class="ic"><use href="#fclose"/></svg><span>其它</span></div>
        <div class="tr f"><svg class="chev" viewBox="0 0 10 6"><path d="M1 1l4 4 4-4" fill="none" stroke="#444" stroke-width="1.300"/></svg><svg class="ic"><use href="#fopen"/></svg><span>自定义</span></div>
        <div class="tr c"><span class="selbox"><svg class="ic"><use href="#tp"/></svg><span>自定义点</span></span></div>
        <div class="tr c"><svg class="ic"><use href="#tl"/></svg><span>自定义线<i class="m">(X)</i></span><svg class="ic tbi"><use href="#tb"/></svg></div>
        <div class="tr c"><svg class="ic"><use href="#ta"/></svg><span>自定义面</span></div>
        <div class="tr c last"><svg class="ic"><use href="#td"/></svg><span>尺寸标注<i class="m">(W)</i></span></div>
        <div class="tr f"><span class="chevgap"></span><svg class="ic"><use href="#fclose"/></svg></div>
      </div>
      <div class="vs">
        <svg class="vsa" viewBox="0 0 15 15"><path d="M3 9l4.500-4.500L12 9" fill="none" stroke="#555" stroke-width="1.500"/></svg>
        <div class="vst"><div class="vsthumb"></div></div>
        <svg class="vsa" viewBox="0 0 15 15"><path d="M3 6l4.500 4.500L12 6" fill="none" stroke="#555" stroke-width="1.500"/></svg>
      </div>
      <svg class="cursor" viewBox="0 0 12 16"><path d="M1 0l10 9H6l3 6-2 1-3-6-3 3z" fill="#b8b8b8" stroke="#888" stroke-width=".5"/></svg>
    </div>
    <div class="hs">
      <svg class="hsa" viewBox="0 0 15 15"><path d="M9 3L4.500 7.500 9 12" fill="none" stroke="#555" stroke-width="1.500"/></svg>
      <div class="hst"><div class="hsthumb"></div></div>
      <svg class="hsa" viewBox="0 0 15 15"><path d="M6 3l4.500 4.500L6 12" fill="none" stroke="#555" stroke-width="1.500"/></svg>
    </div>
  </div>
  <div class="navbtn">单构件输入</div>
  <div class="navbtn">报表预览</div>
</aside>

<section class="center">
  <div class="bar r1">
    <i class="grip"></i>
    <span class="it"><svg class="ic"><use href="#brush"/></svg>删除</span><i class="sep"></i>
    <span class="it"><svg class="ic"><use href="#copy"/></svg>复制</span>
    <span class="it"><svg class="ic"><use href="#mirror"/></svg>镜像</span><i class="sep"></i>
    <span class="it"><svg class="ic"><use href="#move"/></svg>移动</span>
    <span class="it"><svg class="ic"><use href="#rotate"/></svg>旋转</span><i class="sep"></i>
    <span class="it dim"><svg class="ic"><use href="#ext"/></svg>延伸</span>
    <span class="it dim"><svg class="ic"><use href="#trim"/></svg>修剪</span><i class="sep"></i>
    <span class="it dim"><svg class="ic"><use href="#brk"/></svg>打断</span>
    <span class="it dim ml-2"><svg class="ic"><use href="#mrg"/></svg>合并</span>
    <span class="it dim"><svg class="ic"><use href="#spl"/></svg>分割</span><i class="sep"></i>
    <span class="it"><svg class="ic"><use href="#align"/></svg>对齐</span><i class="ar tight"></i>
    <span class="it dim"><svg class="ic"><use href="#off"/></svg>偏移</span>
    <span class="it dim ml-2"><svg class="ic"><use href="#strc"/></svg>拉伸</span>
    <b class="more pushed">»</b>
  </div>
  <div class="bar r2">
    <i class="grip"></i>
    <div class="combo c1"><span>基础层</span><i class="ar"></i></div>
    <div class="combo c2"><span>自定义</span><i class="ar"></i></div>
    <div class="combo c3"><span>自定义点</span><i class="ar"></i></div>
    <div class="combo c4"><span>ZDYD-1</span><i class="ar"></i></div>
    <i class="sep"></i>
    <div class="group">
      <span class="it on"><svg class="ic"><use href="#attr"/></svg>属性</span>
      <span class="it on"><svg class="ic"><use href="#edit"/></svg>编辑钢筋</span>
    </div>
    <span class="it ml1"><svg class="ic"><use href="#lst"/></svg>构件列表</span>
    <span class="it ml5"><svg class="ic"><use href="#pick"/></svg>拾取构件</span>
    <i class="grip g2"></i>
    <span class="it"><svg class="ic"><use href="#two"/></svg>两点</span>
    <span class="it ml5"><svg class="ic"><use href="#par"/></svg>平行</span>
    <span class="it ml5"><svg class="ic"><use href="#ang"/></svg>点角</span><i class="ar a6"></i>
    <b class="more pushed">»</b>
  </div>
  <div class="r3">
    <div class="r3-a">
      <i class="grip"></i>
      <span class="it on solo"><svg class="ic"><use href="#arrow"/></svg>选择</span><i class="ar"></i><i class="sep"></i>
      <span class="it"><svg class="ic"><use href="#pt"/></svg>点</span>
      <span class="it"><svg class="ic"><use href="#rpt"/></svg>旋转点</span><i class="sep"></i>
      <span class="it"><svg class="ic"><use href="#smart"/></svg>智能布置</span><i class="ar"></i>
    </div>
    <div class="r3-b"><i class="grip"></i></div>
  </div>

  <div class="viewport">
    <svg class="scene" viewBox="170 166 765 220">
      <g class="grid">
        <path d="M427 166L318 385M258 247L190 385M527 166L412 385M608 166L500 385M651 166L543 385M780 166L670 385M821 166L711 385M906 166L798 385M934 217L850 385"/>
        <path d="M720 166L934 213M448 166L934 274M170 307L517 385M170 334L403 385"/>
      </g>
      <g class="hexes">
        <circle cx="512" cy="178" r="15" stroke-dasharray="5 1"/>
        <circle cx="512" cy="178" r="10" stroke-dasharray="4 2"/>
        <circle cx="183" cy="311" r="12" stroke-dasharray="6 1"/>
      </g>
      <text class="lbl" x="179" y="316">B</text>
      <text class="lbl" x="507" y="182">9</text>
      <path class="side" d="M482 290l27 6v11l-6 11-20-5z"/>
      <path class="front" d="M482 290l21 5v23l-20-5z"/>
      <path class="gside" d="M522 298l26 6v11l-5 12-21-6z"/>
      <path class="gfront" d="M522 298l21 5v24l-21-6z"/>
      <g class="beam">
        <path class="b-top" d="M170 166H298L815 283 801 311 170 171z"/>
        <path class="b-front" d="M170 171L801 311 804 361 414 274 414 278 410 280 170 227z"/>
        <path class="b-end" d="M815 283L817 336 804 361 801 311z"/>
      </g>
      <path class="seam" d="M422 195L408 222 411 279"/>
      <path class="bsq" d="M485 217l20 5-7 12-19-4z"/>
      <path class="bsqd" d="M491 229h8M490 231h8M489 233h8"/>
      <path class="ax-x" d="M225 335L258 343"/><path class="ax-xh" d="M272 346l-15-5-1 6z"/>
      <path class="ax-y" d="M226 334L238 312"/><path class="ax-yh" d="M242 302l-8 6 7 3z"/>
      <path class="ax-z" d="M224 335V310"/><path class="ax-zh" d="M223 301l-5 9h10z"/>
      <text class="t-z" x="210" y="303">Z</text><text class="t-y" x="247" y="316">Y</text><text class="t-x" x="265" y="338">X</text>
      <ellipse class="ring" cx="513.500" cy="266.500" rx="76.500" ry="86.500"/>
    </svg>
  </div>

  <div class="r4">
    <div class="r4-a">
      <i class="grip"></i>
      <span class="it"><svg class="ic"><use href="#ortho"/></svg>正交</span>
      <span class="it on solo"><svg class="ic"><use href="#snap"/></svg>对象捕捉</span>
      <span class="it ml-3"><svg class="ic"><use href="#dyn"/></svg>动态输入</span>
    </div>
    <div class="r4-b">
      <i class="grip"></i>
      <span class="it"><svg class="ic"><use href="#cross"/></svg>交点</span>
      <div class="group">
        <span class="it on"><svg class="ic"><use href="#perp"/></svg>垂点</span>
        <span class="it on"><svg class="ic"><use href="#mid"/></svg>中点</span>
      </div>
      <span class="it ml-3"><svg class="ic"><use href="#vtx"/></svg>顶点</span>
      <span class="it ml1"><svg class="ic"><use href="#crd"/></svg>坐标</span>
    </div>
    <div class="r4-c">
      <div class="combo c5"><span>不偏移</span><i class="ar"></i></div>
      <span class="dimtxt">X=</span>
      <div class="spin"><span>0</span><i class="spbtn"><svg viewBox="0 0 8 18"><path d="M1 6l3-3 3 3zM1 12l3 3 3-3z" fill="#777"/></svg></i></div>
      <span class="dimtxt">mm</span><span class="dimtxt">Y=</span>
      <div class="spin"><span>0</span><i class="spbtn"><svg viewBox="0 0 8 18"><path d="M1 6l3-3 3 3zM1 12l3 3 3-3z" fill="#777"/></svg></i></div>
      <b class="more pushed">»</b>
    </div>
  </div>

  <div class="rebar">
    <div class="splitter">
      <svg class="closex" viewBox="0 0 10 10"><rect x=".5" y=".5" width="9" height="9" fill="#eee" stroke="#555"/><path d="M2 2l6 6M8 2L2 8" stroke="#a03030"/></svg>
      <i class="dots"></i>
    </div>
    <div class="rebar-main">
      <div class="r5">
        <svg class="ic"><use href="#first"/></svg><svg class="ic"><use href="#prev"/></svg><svg class="ic"><use href="#next"/></svg><svg class="ic"><use href="#last"/></svg><i class="sep"></i>
        <svg class="ic"><use href="#up"/></svg><svg class="ic"><use href="#down"/></svg><i class="sep"></i>
        <span class="it dim"><svg class="ic"><use href="#ins"/></svg>插入</span>
        <span class="it dim"><svg class="ic"><use href="#del"/></svg>删除</span>
        <span class="it"><svg class="ic"><use href="#scl"/></svg>缩尺配筋</span>
        <span class="it"><svg class="ic"><use href="#info"/></svg>钢筋信息</span>
        <span class="it"><svg class="ic"><use href="#lib"/></svg>钢筋图库</span>
        <span class="it"><svg class="ic"><use href="#other"/></svg>其他</span><i class="ar tight"></i>
        <span class="ml-2">关闭</span><i class="sep"></i>
        <span>单构件钢筋总重(kg)：5.136</span>
      </div>
      <div class="rt-wrap">
        <table class="rt">
          <colgroup><col class="w34"><col class="w72"><col class="w34"><col class="w201"><col class="w166"><col class="w156"><col class="w61"><col class="w25"></colgroup>
          <thead><tr><th></th><th>筋号</th><th>图号</th><th>图形</th><th>计算公式</th><th class="hot">公式描述</th><th>长度<i class="m">(mm)</i></th><th></th></tr></thead>
          <tbody>
            <tr class="g h29"><td class="n hot2">1*</td><td class="bk wrap">自定义点纵筋<i class="m">.1</i></td><td><i class="m">1</i></td><td class="shape"><svg class="s1" viewBox="0 0 201 28"><text x="90" y="16" class="rnum">1100</text><path d="M23 18h150" stroke="#000" stroke-width="2"/></svg></td><td><i class="m">1150-25-25</i></td><td class="desc">净长</td><td><i class="m">1100</i></td><td><i class="m">4</i></td></tr>
            <tr class="g h34"><td class="n w">2</td><td class="bk"><i class="m">1</i></td><td><i class="m">195</i></td><td class="shape"><svg class="s1" viewBox="0 0 201 33"><text x="55" y="22" class="bnum">150</text><path d="M82.500 7.500h33v21h-33zM115 8l-12 8M115 12l-7 6" fill="none" stroke="#000" stroke-width="2"/><text x="84" y="26" class="rnum">150</text></svg></td><td><i class="m">2*150+2*150+8*d+2*11.9*d</i></td><td></td><td><i class="m">791</i></td><td><i class="m">7</i></td></tr>
            <tr class="h18"><td class="n w">3</td><td class="bk"></td><td></td><td></td><td></td><td></td><td></td><td></td></tr>
          </tbody>
        </table>
        <div class="rhs"><div class="rhs-thumb"></div></div>
      </div>
    </div>
  </div>
</section>

<aside class="props">
  <div class="props-title"><span>属性编辑器</span><span class="pt-icons"><svg class="ti" viewBox="0 0 10 12"><path d="M3 1h4v6h1.500v1h-3v3h-1V8h-3V7H3z" fill="#222"/></svg><svg class="ti" viewBox="0 0 10 12"><path d="M1 2l8 8M9 2l-8 8" stroke="#222"/></svg></span></div>
  <div class="props-body">
    <table class="pt">
      <colgroup><col class="pw20"><col class="pw121"><col></colgroup>
      <thead><tr><th></th><th>属性名称</th><th class="hot">属性值</th></tr></thead>
      <tbody>
        <tr class="selrow"><td class="n hot2">1</td><td class="nm sel">名称</td><td class="val"><i class="m">ZDYD-1</i></td></tr>
        <tr><td class="n"><i class="m">2</i></td><td class="nm">构件类型</td><td>自定义点</td></tr>
        <tr><td class="n"><i class="m">3</i></td><td class="nm blue">截面宽度<i class="m">(mm)</i></td><td><i class="m">200</i></td></tr>
        <tr><td class="n"><i class="m">4</i></td><td class="nm blue">截面高度<i class="m">(mm)</i></td><td><i class="m">200</i></td></tr>
        <tr><td class="n"><i class="m">5</i></td><td class="nm blue">纵筋</td><td><i class="m">4</i><span class="rb">ф</span><i class="m">12</i></td></tr>
        <tr><td class="n"><i class="m">6</i></td><td class="nm blue">其它钢筋</td><td><i class="m">195</i></td></tr>
        <tr><td class="n"><i class="m">7</i></td><td class="nm">备注</td><td></td></tr>
        <tr><td class="n"><i class="m">8</i></td><td class="nm grp"><svg class="exp" viewBox="0 0 12 12"><rect x=".5" y=".5" width="11" height="11" fill="#fff" stroke="#aaa"/><path d="M3 6h6" stroke="#111"/></svg>其它属性</td><td></td></tr>
        <tr><td class="n"><i class="m">9</i></td><td class="nm sub">归类名称</td><td><i class="m">(ZDYD-1)</i></td></tr>
        <tr><td class="n"><i class="m">10</i></td><td class="nm sub">汇总信息</td><td><i class="m">(</i>自定义点<i class="m">)</i></td></tr>
        <tr><td class="n"><i class="m">11</i></td><td class="nm sub">保护层厚度<i class="m">(mm)</i></td><td><i class="m">(25)</i></td></tr>
        <tr><td class="n"><i class="m">12</i></td><td class="nm sub">计算设置</td><td>按默认计算设置计算</td></tr>
        <tr><td class="n"><i class="m">13</i></td><td class="nm sub">搭接设置</td><td>按默认搭接设置计算</td></tr>
        <tr><td class="n"><i class="m">14</i></td><td class="nm sub">顶标高<i class="m">(m)</i></td><td>层顶标高<i class="m">(-0.05)</i></td></tr>
        <tr><td class="n"><i class="m">15</i></td><td class="nm subl">底标高<i class="m">(m)</i></td><td>层底标高<i class="m">+1(-1.2)</i></td></tr>
        <tr><td class="n"><i class="m">16</i></td><td class="nm grp"><svg class="exp" viewBox="0 0 12 12"><rect x=".5" y=".5" width="11" height="11" fill="#fff" stroke="#aaa"/><path d="M3 6h6M6 3v6" stroke="#111"/></svg>锚固搭接</td><td></td></tr>
        <tr><td class="n"><i class="m">25</i></td><td class="nm grp"><svg class="exp" viewBox="0 0 12 12"><rect x=".5" y=".5" width="11" height="11" fill="#fff" stroke="#aaa"/><path d="M3 6h6M6 3v6" stroke="#111"/></svg>显示样式</td><td></td></tr>
      </tbody>
    </table>
  </div>
</aside>

</main>

<footer class="status">
  <div class="st st-a"><i class="m">X=478949 Y=13635</i></div>
  <div class="st st-b">层高:<i class="m">2.15m</i></div>
  <div class="st st-c">底标高:<i class="m">-2.2m</i></div>
  <div class="st st-d"><i class="m">1(4)</i></div>
  <div class="st st-e">按鼠标左键指定第一个角点，或拾取构件图元</div>
  <div class="st st-f"><i class="m">529.1 FPS</i></div>
</footer>

<div class="taskbar">
  <div class="start"><svg class="startlogo" viewBox="0 0 16 16"><path d="M0 2.500l6.500-1v6H0zM7.500 1.300L16 0v7.500H7.500zM0 8.500h6.500v6L0 13.500zM7.500 8.500H16V16l-8.500-1.200z" fill="#fff"/></svg></div>
  <div class="search">
    <svg class="cortana" viewBox="0 0 20 20"><circle cx="10" cy="10" r="8" fill="none" stroke="#e8e8e8" stroke-width="2.500"/></svg>
    <span>在这里输入你要搜索的内容</span>
    <svg class="mic" viewBox="0 0 12 18"><rect x="3.500" y="1" width="5" height="10" rx="2.500" fill="none" stroke="#aaa"/><path d="M1 8c0 6 10 6 10 0M6 13v3M3 16.500h6" fill="none" stroke="#aaa"/></svg>
  </div>
  <div class="slot s-task"><svg class="tk" viewBox="0 0 20 20"><path d="M6.500 2.500h7v15h-7zM3.500 5H1.500v10h2M16.500 5h2v10h-2" fill="none" stroke="#fff"/></svg></div>
  <div class="slot s-fan"><svg class="tk22"><use href="#fan"/></svg></div>
  <div class="slot s-ie0"><svg class="tk22"><use href="#ie0"/></svg></div>
  <div class="slot s-sw"><svg class="tk22"><use href="#swirl"/></svg><svg class="ybell" viewBox="0 0 14 14"><path d="M7 1c3 0 3 3 3 5l2 4H2l2-4c0-2 0-5 3-5z" fill="#e8a820"/><circle cx="7" cy="12" r="1.500" fill="#e8a820"/></svg></div>
  <i class="tsep"></i>
  <div class="slot s-edge"><svg class="tk22"><use href="#edge"/></svg></div>
  <div class="slot s-ie"><svg class="tk22"><use href="#iee"/></svg></div>
  <div class="slot s-fold"><svg class="tk22"><use href="#fold"/></svg></div>
  <div class="slot s-grn run"><svg class="tk24"><use href="#grn"/></svg></div>
  <div class="slot s-gl run"><svg class="tk24"><use href="#gl"/></svg></div>
  <div class="slot s-act run"><svg class="tk24"><use href="#cross2"/></svg></div>
  <div class="slot s-note run"><svg class="tk24"><use href="#note"/></svg></div>
  <i class="tsep s2"></i><span class="link">链接</span>
  <div class="cpu"><span>37%</span><span>CPU使用</span></div>
  <div class="tray">
    <svg class="tr16" viewBox="0 0 16 16"><path d="M2 11l6-6 6 6" fill="none" stroke="#fff" stroke-width="1.300"/></svg>
    <svg class="tr16" viewBox="0 0 16 16"><path d="M8 1c3 0 4 3 4 6v4l2 2H2l2-2V7c0-3 1-6 4-6z" fill="#fff"/><path d="M6 14.500h4" stroke="#fff"/></svg>
    <svg class="tr16" viewBox="0 0 16 16"><path d="M4 4h9v9H4z" fill="none" stroke="#fff"/><path d="M5 6h7v6H5z" fill="#ccc"/><path d="M2 1v4M5 1v4M1 5h6" stroke="#fff"/></svg>
    <svg class="tr16" viewBox="0 0 16 16"><path d="M1 14A13 13 0 0 1 14 1M4 14A10 10 0 0 1 14 4M7 14a7 7 0 0 1 7-7M10 14a4 4 0 0 1 4-4" fill="none" stroke="#ddd"/></svg>
    <svg class="tr16 ml-4" viewBox="0 0 16 16"><path d="M1 6h3l4-4v12l-4-4H1z" fill="none" stroke="#fff"/><path d="M10 5a4 4 0 0 1 0 6M12 3a7 7 0 0 1 0 10" fill="none" stroke="#ccc"/></svg>
    <svg class="trk ml1" viewBox="0 0 22 16"><rect x=".5" y=".5" width="21" height="15" fill="none" stroke="#fff"/><path d="M3 4h16M3 7h16M6 11h10" stroke="#fff" stroke-dasharray="2 1"/></svg>
    <span class="zh">中</span>
    <span class="sgs">S</span>
  </div>
  <div class="clock"><span>16:25</span><span>2018/8/1</span></div>
  <svg class="notif" viewBox="0 0 16 16"><path d="M.5 1.500h15v10h-5l-2.500 3-2.500-3h-5z" fill="none" stroke="#fff"/></svg>
</div>

<svg class="marks" viewBox="0 0 1366 768" aria-hidden="true">
  <ellipse class="ring" cx="1104.500" cy="177.500" rx="64.500" ry="86.500"/>
  <ellipse class="ring" cx="1117" cy="396" rx="179" ry="41"/>
</svg>

<div class="badge"><span>72</span></div>

<div class="ime">
  <span class="ime-s">S</span>
  <div class="ime-bar">
    <span class="ime-zh">中</span><span class="ime-p">°,</span>
    <svg class="imei" viewBox="0 0 16 16"><circle cx="8" cy="8" r="7" fill="none" stroke="#1f7fd1" stroke-width="1.500"/><path d="M6 5v2M10 5v2M5 10c2 2 4 2 6 0" stroke="#1f7fd1" fill="none" stroke-width="1.300"/></svg>
    <svg class="imei" viewBox="0 0 16 16"><rect x="5" y="0" width="6" height="11" rx="3" fill="#1f7fd1"/><path d="M3 7c0 6 10 6 10 0M8 12v3M5 15.500h6" fill="none" stroke="#1f7fd1" stroke-width="1.300"/></svg>
    <svg class="imei" viewBox="0 0 16 16"><rect x="0" y="2" width="16" height="12" rx="2" fill="#1f7fd1"/><path d="M2 5h12M2 8h12M4 11h8" stroke="#fff" stroke-dasharray="2 1"/></svg>
    <svg class="imei" viewBox="0 0 16 16"><circle cx="6" cy="4" r="3" fill="#aab8c8"/><path d="M1 13c0-4 2-5 5-5 2 0 3 1 3 2v3z" fill="#aab8c8"/><rect x="8" y="9" width="8" height="6" fill="#fff" stroke="#aab8c8"/></svg>
    <svg class="imei" viewBox="0 0 16 16"><path d="M5 1L0 4l2 4 2-1v8h8V7l2 1 2-4-5-3c-1 2-5 2-6 0z" fill="#1f7fd1"/></svg>
    <svg class="imei" viewBox="0 0 16 16"><path d="M15 4l-3 3-2-1-1-2 3-3c-2-1-5 0-6 2-1 2 0 3 0 4l-6 6 3 3 6-6c1 0 3 1 4 0 2-1 3-4 2-6z" fill="#1f7fd1"/></svg>
  </div>
</div>

</div>
</body>
</html>
```

FILE: styles.css
```css
*{box-sizing:border-box;margin:0;padding:0}
html,body{width:1366px;height:768px;overflow:hidden}
body{font:12px/1.2 "Noto Sans CJK SC","Liberation Sans",sans-serif;color:#000;background:#f0f0f0}
.defs{position:absolute;width:0;height:0}
i{font-style:normal}
.m{font:10px/1 "DejaVu Sans Mono",monospace}
.app{width:1366px;height:768px;display:flex;flex-direction:column;position:relative;overflow:hidden;background:#eeeeee}
.ic{width:16px;height:16px;flex:none;display:block}
.it{display:flex;align-items:center;gap:4px;white-space:nowrap;flex:none}
.dim{color:#a6a6a6}
.ar{display:block;flex:none;width:7px;height:4px;border-left:3.5px solid transparent;border-right:3.5px solid transparent;border-top:4px solid #222}
.ar.tight{margin-left:-3px}
.sep{display:block;flex:none;width:1px;height:22px;background:#c4c4c4;margin:0 -1px}
.sep.n{margin:0 -2px}
.more{flex:none;font:bold 12px/1 "Liberation Sans",sans-serif;align-self:flex-start;margin-top:2px}
.more.pushed{margin-left:auto}
.grip{display:block;flex:none;width:3px;height:20px;background:repeating-linear-gradient(180deg,#9a9a9a 0 2px,transparent 2px 4px)}
.ml-1{margin-left:-1px}.ml-2{margin-left:-2px}.ml-3{margin-left:-3px}.ml-4{margin-left:-4px}.ml1{margin-left:1px}.ml2{margin-left:2px}.ml3{margin-left:3px}

/* title */
.title{height:23px;background:#fff;display:flex;align-items:center;flex:none;padding-left:2px}
.appicon{width:14px;height:14px;flex:none}
.title-text{margin-left:2px;font-size:12.700px;white-space:nowrap;flex:none}
.winbtns{margin-left:auto;display:flex}
.win{width:46px;height:23px;display:block}

/* menu */
.menu{height:31px;display:flex;align-items:center;flex:none;position:relative}
.menu-items{display:flex;align-items:center;gap:10px;padding-left:7px;width:937px;flex:none}
.gx{margin-left:-7px}
.notice{width:188px;height:31px;background:#f8f8f8;color:#3a7a00;display:flex;align-items:center;padding-left:29px;flex:none;margin-top:1px;white-space:nowrap}
.user{display:flex;align-items:center;gap:6px;padding-left:5px;flex:none}
.bean{margin-left:4px}
.bell{width:14px;height:20px;margin-left:8px}
.menu>.more{margin-left:auto;margin-right:3px;margin-top:4px}

/* toolbar 1 */
.tb1{height:30px;display:flex;flex:none;gap:2px}
.tb1-a,.tb1-b,.tb1-c{display:flex;align-items:center;gap:7px;background:#f6f6f6;height:28px;flex:none}
.tb1-a{width:150px;padding-left:4px}
.tb1-a .more{margin-left:16px}
.tb1-b{width:551px;padding-left:5px}
.tb1-b .more{margin-left:5px}
.tb1-c{width:661px;margin-left:2px;padding:0 3px 0 1px}
.sigma{width:16px;text-align:center;font:bold 15px/16px "Liberation Serif",serif}
.lit{background:#fff;height:28px}

/* layout */
.main{flex:1;display:flex;min-height:0;padding-bottom:2px}
.nav{width:165px;flex:none;display:flex;flex-direction:column;margin-right:1px}
.paneltitle{height:15px;background:#0b5fe0;color:#fff;display:flex;align-items:center;justify-content:space-between;flex:none;white-space:nowrap;font-size:12.600px}
.pt-icons{display:flex;gap:9px;padding-right:4px;align-items:center}
.ti{width:10px;height:12px;display:block}
.navbtn{height:22px;margin-top:1px;border:1px solid #b4b4b4;background:#efefef;text-align:center;line-height:20px;flex:none}
.treebox{flex:1;margin:1px 1px 0 2px;border:1px solid #a8a8a8;display:flex;flex-direction:column;background:#f0f0f0;min-height:0}
.treetop{height:27px;background:#fff;display:flex;gap:7px;padding:3px 0 0 4px;flex:none}
.tti{width:16px;height:16px;display:block}
.treemid{flex:1;display:flex;min-height:0;position:relative;background:#fff}
.treelist{flex:1;overflow:hidden;min-width:0}
.tr{height:16px;display:flex;align-items:center;gap:5px;white-space:nowrap;
  --dv:repeating-linear-gradient(180deg,#777 0 1px,transparent 1px 2px);
  --dh:repeating-linear-gradient(90deg,#777 0 1px,transparent 1px 2px);
  background-repeat:no-repeat}
.tr.c{padding-left:42px;background-image:var(--dv),var(--dv),var(--dh);background-position:12px 0,31px 0,32px 8px;background-size:1px 100%,1px 100%,10px 1px}
.tr.c.last{background-size:1px 100%,1px 9px,10px 1px}
.tr.f{padding-left:6px;background-image:var(--dv),var(--dh);background-position:12px 0,13px 8px;background-size:1px 100%,9px 1px;gap:5px}
.chev{width:10px;height:6px;flex:none;background:#fff}
.chevgap{width:10px;flex:none}
.selbox{display:flex;align-items:center;gap:5px;background:#d8d8d8;width:76px;height:16px;margin-left:-2px;padding-left:2px}
.tbi{margin-left:-2px;width:14px;height:14px}
.vs{width:15px;flex:none;display:flex;flex-direction:column;background:#f0f0f0;margin-right:1px}
.vsa{width:15px;height:15px;flex:none;display:block}
.vst{flex:1}
.vsthumb{width:15px;height:210px;margin-top:218px;background:#cdcdcd}
.cursor{position:absolute;left:47px;top:448px;width:12px;height:16px}
.hs{height:16px;display:flex;flex:none;background:#f0f0f0}
.hsa{width:15px;height:15px;flex:none;display:block}
.hst{flex:1;padding-left:3px}
.hsthumb{width:102px;height:15px;background:#cdcdcd}

/* center */
.center{width:770px;flex:none;display:flex;flex-direction:column;padding-left:4px;min-height:0}
.bar{display:flex;align-items:center;gap:7px;background:#f6f6f6;flex:none;padding-left:3px}
.r1{height:26px;margin-top:1px}
.r1 .grip{margin-right:-2px}
.r2{height:25px;margin-top:2px;gap:2px}
.r2>.it{margin-left:4px}
.r2>.ml1{margin-left:1px}
.r2>.ml5{margin-left:5px}
.r2>.g2{margin-left:6px}
.r2>.g2+.it{margin-left:4px}
.r2>.a6{margin-left:6px}
.r2>.more{margin-right:4px}
.r1>.more{margin-right:4px}
.combo{display:flex;align-items:center;justify-content:space-between;background:#fff;height:22px;padding:0 3px 0 2px;flex:none;white-space:nowrap}
.c1{width:57px;margin-left:1px}
.c2{width:70px}
.c3{width:70px}
.c4{width:70px}
.group{display:flex;border:1px solid #3d8bd0;flex:none;margin-left:2px;height:24px}
.r2 .group{margin-left:4px}
.group .it+.it{border-left:1px solid #3d8bd0}
.it.on{background:#d6e6f4;padding:0 3px}
.group .it.on{height:22px}
.solo{border:1px solid #3d8bd0;height:24px}
.r3{height:25px;margin-top:2px;display:flex;flex:none}
.r3-a{display:flex;align-items:center;gap:7px;background:#f6f6f6;width:268px;padding-left:3px}
.r3-a .solo{margin-left:-4px;width:51px;padding-left:2px;gap:2px}
.r3-a .ar{margin-left:-2px;margin-right:-5px}
.r3-b{width:30px;background:#f6f6f6;margin-left:145px;padding:2px 0 0 3px}
.viewport{margin-top:1px;height:220px;flex:none;background:#000;overflow:hidden}
.scene{display:block;width:765px;height:220px;shape-rendering:crispEdges}
.grid path{fill:none;stroke:#f00000;stroke-width:1;shape-rendering:auto}
.hexes circle{fill:none;stroke:#0e8a0e;stroke-width:1;shape-rendering:auto}
.lbl{font:13px "Liberation Mono",monospace;fill:#e0e0e0;shape-rendering:auto}
.side{fill:#0048a0}
.front{fill:#005cb8}
.gside{fill:#a0a0a0}
.gfront{fill:#c8c8c8}
.b-top{fill:#00e600}
.b-front{fill:#00ae00}
.b-end{fill:#009c00}
.seam{fill:none;stroke:#009000;stroke-dasharray:3 2}
.bsq{fill:#0a78e8}
.bsqd{fill:none;stroke:#30b0a0;stroke-dasharray:1 1}
.ax-x{stroke:#f00000;stroke-width:3;fill:none}
.ax-xh{fill:#f00000}
.ax-y{stroke:#10e010;stroke-width:3;fill:none}
.ax-yh{fill:#10e010}
.ax-z{stroke:#1080f0;stroke-width:4;fill:none}
.ax-zh{fill:#1080f0}
.t-z{font:13px "Liberation Sans",sans-serif;fill:#1e8cff}
.t-y{font:11px "Liberation Sans",sans-serif;fill:#30c030}
.t-x{font:11px "Liberation Sans",sans-serif;fill:#c03030}
.ring{fill:none;stroke:#ff0000;stroke-width:6.500}
.r4{height:24px;margin-top:2px;display:flex;flex:none;gap:3px}
.r4-a,.r4-b{display:flex;align-items:center;gap:6px;background:#f6f6f6;flex:none;padding-left:3px}
.r4-a{width:210px}
.r4-a .solo{width:75px;padding:0 2px;gap:3px;margin-left:-2px}
.r4-a .grip{margin-right:-1px}
.r4-b{width:263px;gap:6px}
.r4-b .grip{margin-right:-5px}
.r4-b .group{margin-left:-2px}
.r4-b .group .it.on{width:51px;padding:0 2px}
.r4-c{flex:1;display:flex;align-items:center;background:#f6f6f6;gap:3px;padding-left:6px}
.c5{width:58px;height:24px;margin-right:7px}
.dimtxt{color:#a0a0a0;flex:none}
.spin{width:57px;height:22px;border:1px solid #9a9a9a;background:#f4f4f4;display:flex;align-items:center;justify-content:flex-end;color:#888;gap:5px;padding-right:2px;flex:none}
.spbtn{width:8px;height:18px;display:block}
.spbtn svg{width:8px;height:18px;display:block}
.r4-c .more{margin-right:6px}
.rebar{flex:1;display:flex;min-height:0;margin-top:6px}
.splitter{width:13px;flex:none;display:flex;flex-direction:column;align-items:flex-start}
.closex{width:10px;height:10px;margin-top:2px;display:block}
.dots{display:block;width:6px;margin:12px 0 0 4px;flex:1;background:radial-gradient(circle,#9a9a9a 0.8px,transparent 1px) 0 0/3px 4px}
.rebar-main{flex:1;display:flex;flex-direction:column;min-width:0}
.r5{height:27px;display:flex;align-items:center;gap:7px;flex:none;background:#f6f6f6;padding-left:5px;white-space:nowrap}
.rt-wrap{flex:1;background:#fff;display:flex;flex-direction:column;justify-content:space-between;min-height:0;margin-top:1px}
table{border-collapse:collapse;table-layout:fixed}
.rt{width:749px}
.w34{width:34px}.w72{width:72px}.w201{width:201px}.w166{width:166px}.w156{width:156px}.w61{width:61px}.w25{width:25px}
.rt th,.pt th{font-weight:400;background:linear-gradient(#fff,#ececec);border:1px solid #c4c4c4;height:19px;font-size:12px;padding:0}
.rt .hot,.pt .hot{background:linear-gradient(#fddc9e,#f3c064);color:#660066}
.rt td,.pt td{border:1px solid #c4c4c4;padding:0 0 0 2px;white-space:nowrap;overflow:hidden;vertical-align:middle;line-height:12px}
.rt td{background:#fff}
.rt .g td{background:#ccffd8}
.rt td.n,.rt .g td.n,.pt td.n{background:linear-gradient(#fff,#ececec);text-align:center;padding:0}
.rt .g td.hot2,.pt td.hot2{background:#fcd9a0;color:#660066;text-align:center}
.rt .g td.desc{background:#a8e8d6}
.rt .bk,.rt .g .bk{border-right:1px solid #000}
.rt .wrap{white-space:normal;font-size:12px;word-break:break-all;line-height:13px}
.h29{height:29px}.h34{height:34px}.h18{height:18px}
.rt td.shape{padding:0}
.s1{display:block;width:201px}
.rnum{font:11px "Liberation Sans",sans-serif;fill:#f00000}
.bnum{font:11px "Liberation Sans",sans-serif;fill:#111}
.rhs{height:16px;background:#f0f0f0;flex:none;padding-left:163px}
.rhs-thumb{width:195px;height:16px;background:#cdcdcd}

/* props */
.props{flex:1;margin-left:1px;display:flex;flex-direction:column;min-width:0}
.props-title{height:16px;margin-top:1px;background:#f2f2f2;border-bottom:1px solid #888;display:flex;align-items:center;justify-content:space-between;font-size:12.600px;flex:none;white-space:nowrap;padding-left:1px}
.props-body{flex:1;background:#fff;border:1px solid #b8b8b8;border-top:0;padding:1px 0 0 1px;min-height:0}
.pt{width:423px}
.pw20{width:20px}.pw121{width:121px}
.pt th{height:22px}
.pt td{height:19px}
.pt td.n{text-align:center}
.nm{font-size:12px}
.pt .nm{padding-left:21px}
.pt .sel{background:#0078d7;color:#fff}
.selrow .val{background:#d6e8f8}
.blue{color:#0000e0}
.pt .grp{color:#9a9a9a;padding-left:3px}
.exp{width:12px;height:12px;vertical-align:-2px;margin-right:6px}
.pt .sub,.pt .subl{padding-left:31px;background-repeat:no-repeat;background-image:linear-gradient(#aaa,#aaa),linear-gradient(#aaa,#aaa);background-position:9px 0,9px 9px;background-size:1px 100%,18px 1px}
.pt .subl{background-size:1px 10px,18px 1px}
.rb{display:inline-block;width:12px;text-align:center;font:12px/1 "DejaVu Sans",sans-serif}

/* status */
.status{height:20px;margin:1px 0 0;display:flex;gap:2px;flex:none}
.st{background:#f6f6f6;border:1px solid #e0e0e0;display:flex;align-items:center;padding-left:2px;white-space:nowrap;flex:none}
.st-a{width:148px}.st-b{width:78px}.st-c{width:98px}.st-d{width:48px}.st-e{width:915px}.st-f{flex:1}

/* taskbar */
.taskbar{height:40px;background:#06161e;display:flex;align-items:center;flex:none;color:#e8e8e8;position:relative}
.start{width:48px;height:40px;background:#000;display:flex;align-items:center;justify-content:center;flex:none}
.startlogo{width:16px;height:16px}
.search{width:344px;height:40px;background:#3a3a3a;color:#8e8e8e;display:flex;align-items:center;padding-left:11px;gap:6px;font-size:12.500px;flex:none;white-space:nowrap}
.cortana{width:19px;height:19px;flex:none}
.mic{width:12px;height:18px;margin-left:auto;margin-right:15px}
.slot{height:40px;display:flex;align-items:center;justify-content:center;flex:none;position:relative}
.tk{width:20px;height:20px}
.tk22{width:22px;height:22px;display:block}
.tk24{width:24px;height:24px;display:block}
.s-task{width:48px}
.s-fan{width:52px}
.s-ie0{width:52px}
.s-sw{width:42px}
.ybell{position:absolute;width:14px;height:14px;left:25px;top:3px}
.tsep{display:block;width:3px;height:20px;flex:none;border-left:1px solid #555;border-right:1px solid #333;margin-left:15px}
.s-edge{width:38px;margin-left:16px}
.s-ie{width:42px}
.s-fold{width:38px}
.run{border-bottom:3px solid #76b9ed}
.s-grn{width:31px;margin-left:6px}
.s-gl{width:31px;margin-left:9px}
.s-act{width:38px;margin-left:5px;background:#37464e}
.s-note{width:30px;margin-left:5px}
.s2{margin-left:21px}
.link{margin-left:9px;color:#ccc;flex:none}
.cpu{display:flex;flex-direction:column;align-items:center;margin-left:18px;width:48px;flex:none;line-height:17px;white-space:nowrap}
.tray{display:flex;align-items:center;margin-left:17px;gap:9px;flex:none}
.tr16{width:16px;height:16px;display:block;flex:none}
.trk{width:22px;height:16px;display:block;flex:none}
.zh{font-size:13px;margin-left:1px}
.sgs{width:15px;height:15px;background:#e8401c;color:#fff;font:bold 13px/15px "Liberation Sans",sans-serif;text-align:center;border-radius:3px;margin-left:6px}
.clock{display:flex;flex-direction:column;align-items:flex-end;margin-left:35px;width:52px;line-height:18px;flex:none;white-space:nowrap}
.clock span:first-child{margin-right:10px}
.notif{width:16px;height:16px;margin-left:24px;flex:none}

/* overlays */
.marks{position:absolute;left:0;top:0;width:1366px;height:768px;pointer-events:none;shape-rendering:crispEdges}
.badge{position:absolute;left:781px;top:-24px;width:44px;height:44px;border-radius:50%;background:linear-gradient(#2f9a3a,#5cbc50);border:2px solid #ddd;box-shadow:0 1px 3px #555;display:flex;align-items:flex-end;justify-content:center;color:#fff;padding-bottom:3px;font-size:12px;line-height:14px}
.ime{position:absolute;left:968px;top:3px;display:flex;align-items:center;height:24px}
.ime-s{width:29px;height:24px;background:#f04c1c;border-radius:5px;color:#fff;font:bold 26px/24px "Liberation Sans",sans-serif;text-align:center;flex:none;transform:rotate(-6deg)}
.ime-bar{display:flex;align-items:center;gap:6px;width:178px;height:22px;background:#fff;border:1px solid #c4d0dc;padding-left:5px}
.ime-zh{color:#1f7fd1;font-weight:700;font-size:14px;flex:none}
.ime-p{color:#1f7fd1;font-weight:700;font-size:12px;width:14px;flex:none}
.imei{width:16px;height:16px;flex:none;display:block}
```
